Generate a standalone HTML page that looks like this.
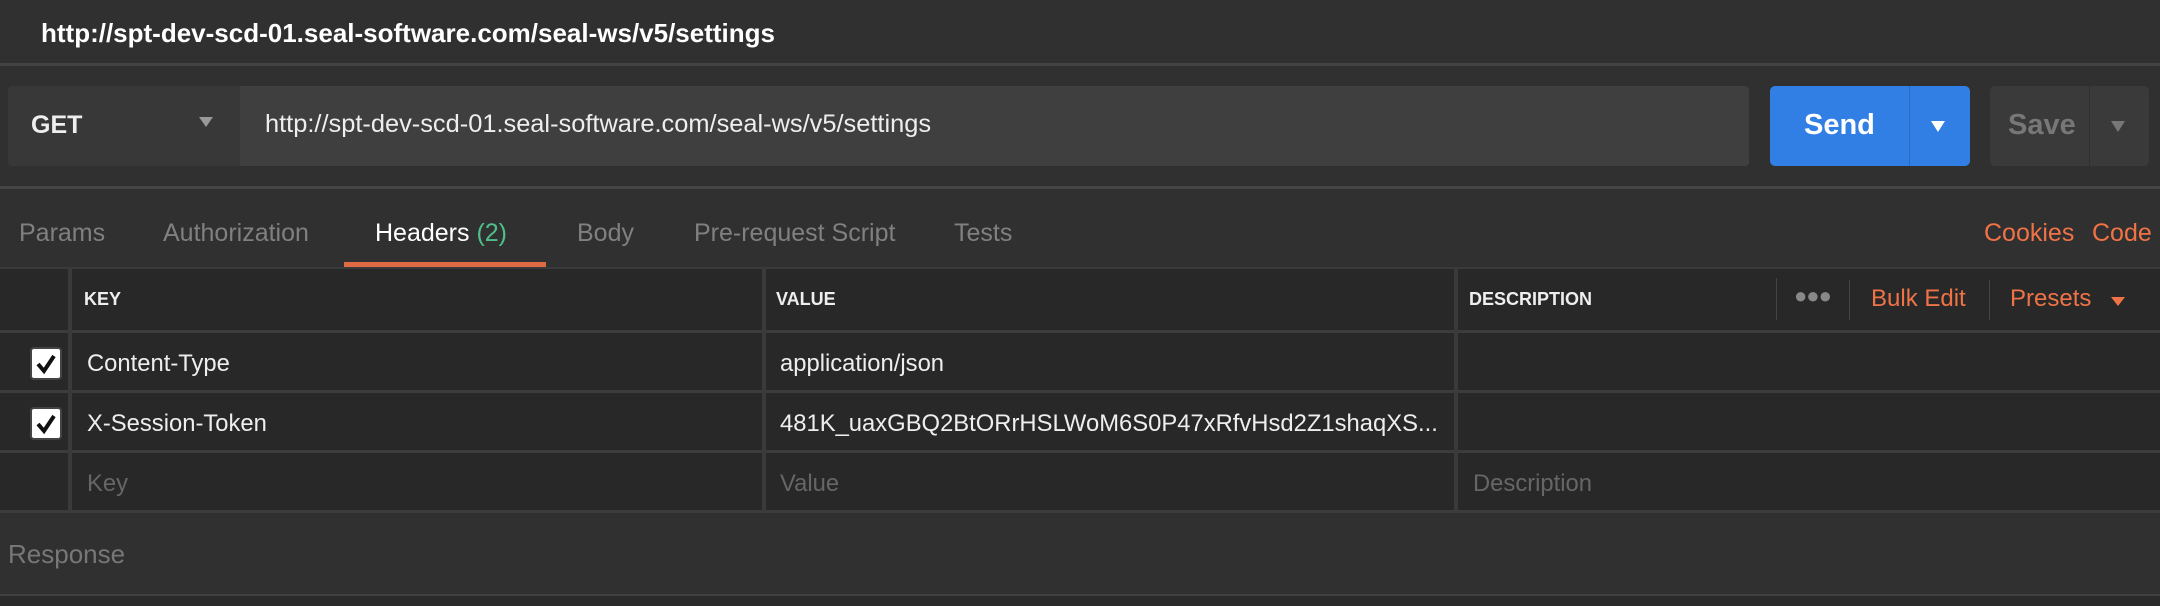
<!DOCTYPE html>
<html><head><style>
*{margin:0;padding:0;box-sizing:border-box}
body{width:2160px;height:606px;background:#303030;font-family:"Liberation Sans",sans-serif;position:relative;overflow:hidden;color:#fff}
.a{position:absolute;white-space:nowrap}
.hl{position:absolute;left:0;width:2160px;background:#444}
.vl{position:absolute;width:4px;background:#3a3a3a}
.t{font-size:25px;color:#808080;top:219px}
.o{color:#ef7346}
</style></head><body>
<div class="a" style="left:41px;top:18px;font-size:26px;font-weight:bold;color:#fff">http://spt-dev-scd-01.seal-software.com/seal-ws/v5/settings</div>
<div class="hl" style="top:63px;height:3px"></div>

<div class="a" style="left:8px;top:86px;width:1741px;height:80px;background:#3f3f3f;border-radius:4px"></div>
<div class="a" style="left:8px;top:86px;width:232px;height:80px;background:#383838;border-radius:4px 0 0 4px"></div>
<div class="a" style="left:31px;top:111px;font-size:25px;font-weight:bold;color:#eee">GET</div>
<div class="a" style="left:199px;top:117px;width:0;height:0;border-left:7px solid transparent;border-right:7px solid transparent;border-top:10px solid #999"></div>
<div class="a" style="left:265px;top:110px;font-size:25.4px;color:#eee">http://spt-dev-scd-01.seal-software.com/seal-ws/v5/settings</div>

<div class="a" style="left:1770px;top:86px;width:200px;height:80px;background:#317fe5;border-radius:5px"></div>
<div class="a" style="left:1909px;top:86px;width:1px;height:80px;background:#2a6cc4"></div>
<div class="a" style="left:1804px;top:109px;font-size:29px;font-weight:bold;color:#fff">Send</div>
<div class="a" style="left:1931px;top:121px;width:0;height:0;border-left:7px solid transparent;border-right:7px solid transparent;border-top:11px solid #fff"></div>
<div class="a" style="left:1990px;top:86px;width:159px;height:80px;background:#3a3a3a;border-radius:5px"></div>
<div class="a" style="left:2089px;top:86px;width:1px;height:80px;background:#303030"></div>
<div class="a" style="left:2008px;top:109px;font-size:29px;font-weight:bold;color:#777">Save</div>
<div class="a" style="left:2111px;top:121px;width:0;height:0;border-left:7px solid transparent;border-right:7px solid transparent;border-top:11px solid #777"></div>

<div class="hl" style="top:186px;height:3px"></div>

<div class="a t" style="left:19px">Params</div>
<div class="a t" style="left:163px">Authorization</div>
<div class="a t" style="left:375px;color:#fff">Headers <span style="color:#4fbf8a">(2)</span></div>
<div class="a t" style="left:577px">Body</div>
<div class="a t" style="left:694px">Pre-request Script</div>
<div class="a t" style="left:954px">Tests</div>
<div class="a t o" style="left:1984px">Cookies</div>
<div class="a t o" style="left:2092px">Code</div>
<div class="a" style="left:344px;top:262px;width:202px;height:6px;background:#e06a44"></div>
<div class="hl" style="top:267px;height:2px;background:#3a3a3a"></div>

<div class="a" style="left:0;top:269px;width:2160px;height:242px;background:#282828"></div>
<div class="hl" style="top:330px;height:3px;background:#3c3c3c"></div>
<div class="hl" style="top:390px;height:3px;background:#3c3c3c"></div>
<div class="hl" style="top:450px;height:3px;background:#3c3c3c"></div>
<div class="hl" style="top:510px;height:3px;background:#3c3c3c"></div>
<div class="vl" style="left:68px;top:269px;height:242px"></div>
<div class="vl" style="left:762px;top:269px;height:242px"></div>
<div class="vl" style="left:1454px;top:269px;height:242px"></div>

<div class="a" style="left:84px;top:289px;font-size:18px;font-weight:bold;color:#eee">KEY</div>
<div class="a" style="left:776px;top:289px;font-size:18px;font-weight:bold;color:#eee">VALUE</div>
<div class="a" style="left:1469px;top:289px;font-size:18px;font-weight:bold;color:#eee">DESCRIPTION</div>
<div class="a" style="left:1776px;top:278px;width:1px;height:42px;background:#444"></div>
<div class="a" style="left:1794px;top:283px;font-size:22px;color:#888;letter-spacing:-1px">●●●</div>
<div class="a" style="left:1849px;top:280px;width:1px;height:40px;background:#444"></div>
<div class="a o" style="left:1871px;top:285px;font-size:24px">Bulk Edit</div>
<div class="a" style="left:1989px;top:280px;width:1px;height:40px;background:#444"></div>
<div class="a o" style="left:2010px;top:285px;font-size:24px">Presets</div>
<div class="a" style="left:2111px;top:297px;width:0;height:0;border-left:7px solid transparent;border-right:7px solid transparent;border-top:9px solid #ef7346"></div>

<div class="a" style="left:30px;top:347px;width:32px;height:33px;background:#fff;border-radius:4px;border:2px solid #444"></div>
<svg class="a" style="left:30px;top:347px" width="32" height="33"><path d="M8 17 L14 24 L24 9" stroke="#111" stroke-width="4" fill="none"/></svg>
<div class="a" style="left:30px;top:407px;width:32px;height:33px;background:#fff;border-radius:4px;border:2px solid #444"></div>
<svg class="a" style="left:30px;top:407px" width="32" height="33"><path d="M8 17 L14 24 L24 9" stroke="#111" stroke-width="4" fill="none"/></svg>

<div class="a" style="left:87px;top:350px;font-size:23.8px;color:#eee">Content-Type</div>
<div class="a" style="left:780px;top:350px;font-size:23.8px;color:#eee">application/json</div>
<div class="a" style="left:87px;top:410px;font-size:23.8px;color:#eee">X-Session-Token</div>
<div class="a" style="left:780px;top:410px;font-size:23.8px;color:#eee">481K_uaxGBQ2BtORrHSLWoM6S0P47xRfvHsd2Z1shaqXS...</div>
<div class="a" style="left:87px;top:470px;font-size:23.8px;color:#666">Key</div>
<div class="a" style="left:780px;top:470px;font-size:23.8px;color:#666">Value</div>
<div class="a" style="left:1473px;top:470px;font-size:23.8px;color:#666">Description</div>

<div class="a" style="left:8px;top:539px;font-size:26px;color:#777">Response</div>
<div class="hl" style="top:594px;height:2px;background:#404040"></div>
<div class="a" style="left:0;top:596px;width:2160px;height:10px;background:#2a2a2a"></div>
</body></html>
